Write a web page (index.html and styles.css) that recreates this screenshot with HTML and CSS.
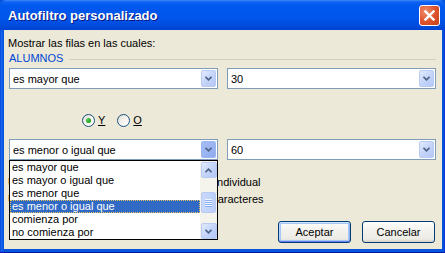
FILE: index.html
```html
<!DOCTYPE html>
<html lang="es">
<head>
    <meta charset="UTF-8">
    <title>Autofiltro personalizado</title>
    <link rel="stylesheet" href="styles.css">
</head>
<body>

<div class="window">
    <div class="titlebar">
        <span class="title">Autofiltro personalizado</span>
        <button class="close" title="Cerrar">
            <svg width="11" height="11" viewBox="0 0 11 11"><path d="M1.5 1.5 L9.5 9.5 M9.5 1.5 L1.5 9.5" stroke="#fff" stroke-width="2.4" stroke-linecap="square"/></svg>
        </button>
    </div>

    <div class="frame">
        <div class="client">
            <p class="intro">Mostrar las filas en las cuales:</p>

            <div class="group">
                <span class="group-label">ALUMNOS</span>
                <span class="group-line"></span>
            </div>

            <div class="row">
                <div class="combo">
                    <span class="combo-text">es mayor que</span>
                    <span class="drop-btn"><svg width="7" height="5" viewBox="0 0 7 5"><path d="M0.5 0.8 L3.5 3.8 L6.5 0.8" fill="none" stroke="#4D6185" stroke-width="1.6"/></svg></span>
                </div>
                <div class="combo">
                    <span class="combo-text">30</span>
                    <span class="drop-btn"><svg width="7" height="5" viewBox="0 0 7 5"><path d="M0.5 0.8 L3.5 3.8 L6.5 0.8" fill="none" stroke="#4D6185" stroke-width="1.6"/></svg></span>
                </div>
            </div>

            <div class="radios">
                <label class="radio"><span class="radio-dot checked"></span><u>Y</u></label>
                <label class="radio"><span class="radio-dot"></span><u>O</u></label>
            </div>

            <div class="row second">
                <div class="combo">
                    <span class="combo-text">es menor o igual que</span>
                    <span class="drop-btn pressed"><svg width="7" height="5" viewBox="0 0 7 5"><path d="M0.5 0.8 L3.5 3.8 L6.5 0.8" fill="none" stroke="#4D6185" stroke-width="1.6"/></svg></span>
                </div>
                <div class="combo">
                    <span class="combo-text">60</span>
                    <span class="drop-btn"><svg width="7" height="5" viewBox="0 0 7 5"><path d="M0.5 0.8 L3.5 3.8 L6.5 0.8" fill="none" stroke="#4D6185" stroke-width="1.6"/></svg></span>
                </div>
            </div>

            <p class="hint first">Use ? para representar cualquier carácter individual</p>
            <p class="hint">Use * para representar cualquier serie de caracteres</p>

            <div class="buttons">
                <button class="btn default">Aceptar</button>
                <button class="btn">Cancelar</button>
            </div>

            <!-- open list of the second combo -->
            <div class="dropdown">
                <ul class="options">
                    <li>es mayor que</li>
                    <li>es mayor o igual que</li>
                    <li>es menor que</li>
                    <li class="selected">es menor o igual que</li>
                    <li>comienza por</li>
                    <li>no comienza por</li>
                </ul>
                <div class="scrollbar">
                    <span class="sb-btn"><svg width="7" height="5" viewBox="0 0 7 5"><path d="M0.5 4.2 L3.5 1.2 L6.5 4.2" fill="none" stroke="#4D6185" stroke-width="1.6"/></svg></span>
                    <span class="sb-thumb"><i></i><i></i><i></i><i></i></span>
                    <span class="sb-btn"><svg width="7" height="5" viewBox="0 0 7 5"><path d="M0.5 0.8 L3.5 3.8 L6.5 0.8" fill="none" stroke="#4D6185" stroke-width="1.6"/></svg></span>
                </div>
            </div>
        </div>
    </div>
</div>

</body>
</html>
```

FILE: styles.css
```css
body {
    margin: 0;
    padding: 0;
    font-family: "Liberation Sans", Arial, sans-serif;
    font-size: 11px;
    color: #000;
    background-color: #ECE9D8;
}

p {
    margin: 0;
}

.window {
    width: 445px;
    height: 253px;
    display: flex;
    flex-direction: column;
    background-color: #0855DD;
    overflow: hidden;
}

.titlebar {
    height: 30px;
    flex: none;
    display: flex;
    align-items: center;
    justify-content: space-between;
    padding: 0 5px 0 8px;
    box-sizing: border-box;
    background: linear-gradient(#3C8CF8 0, #0D62F2 2px, #0058EE 6px, #0055EA 18px, #004BDD 26px, #0042CF 30px);
    border-radius: 6px 6px 0 0;
}

.title {
    color: #fff;
    font-weight: bold;
    font-size: 13px;
    text-shadow: 1px 1px #0A1883;
    margin-top: 1px;
}

.close {
    width: 21px;
    height: 21px;
    padding: 0;
    border: 1px solid #fff;
    border-radius: 3px;
    background: radial-gradient(circle at 30% 30%, #EE8E6E 0, #E0552E 50%, #C7401A 100%);
    display: flex;
    align-items: center;
    justify-content: center;
    margin-top: 1px;
}

.frame {
    flex: 1;
    padding: 0 3px 4px 4px;
    background: linear-gradient(90deg, #0831D9 0, #166AEE 1px, #0855DD 3px, #0855DD calc(100% - 2px), #0831D9 100%);
    display: flex;
    box-shadow: inset 0 -1px #0019A8;
}

.client {
    flex: 1;
    position: relative;
    background-color: #ECE9D8;
    padding: 0 6px 0 5px;
    display: flex;
    flex-direction: column;
}

.intro {
    margin: 7px 0 0 -1px;
    line-height: 13px;
}

.group {
    display: flex;
    align-items: center;
    margin-top: 2px;
    height: 13px;
}

.group-label {
    color: #0046D5;
    line-height: 13px;
}

.group-line {
    flex: 1;
    height: 1px;
    background-color: #D0D0BF;
    margin: 1px 0 0 6px;
}

.row {
    display: flex;
    gap: 9px;
    margin-top: 3px;
}

.row.second {
    margin-top: 12px;
}

.combo {
    width: 209px;
    height: 21px;
    box-sizing: border-box;
    border: 1px solid #7F9DB9;
    background-color: #fff;
    display: flex;
    align-items: center;
}

.combo-text {
    flex: 1;
    padding-left: 3px;
    white-space: nowrap;
}

.drop-btn, .sb-btn {
    width: 15px;
    height: 17px;
    margin-right: 1px;
    box-sizing: border-box;
    border: 1px solid #B9CBF3;
    border-radius: 2px;
    background: linear-gradient(135deg, #E3EBFD 0, #C5D5FA 50%, #B3C6F5 100%);
    display: flex;
    align-items: center;
    justify-content: center;
}

.drop-btn.pressed {
    background: linear-gradient(135deg, #A6BDF4 0, #8FACF0 100%);
    border-color: #9DB6EE;
}

.radios {
    display: flex;
    gap: 12px;
    margin-top: 25px;
    padding-left: 73px;
    height: 13px;
}

.radio {
    display: flex;
    align-items: center;
    gap: 3px;
    line-height: 13px;
}

.radio-dot {
    width: 13px;
    height: 13px;
    box-sizing: border-box;
    border: 1px solid #1C5180;
    border-radius: 50%;
    background: linear-gradient(135deg, #DCDBD5 0, #F4F3EE 50%, #FFFFFF 100%);
    display: flex;
    align-items: center;
    justify-content: center;
}

.radio-dot.checked::after {
    content: "";
    width: 5px;
    height: 5px;
    border-radius: 50%;
    background: radial-gradient(circle at 35% 35%, #5BD05B 0, #21A121 60%, #1A8A1A 100%);
}

.hint {
    margin: 4px 0 0 -1px;
    line-height: 13px;
}

.hint.first {
    margin-top: 16px;
}

.buttons {
    display: flex;
    justify-content: flex-end;
    gap: 11px;
    margin: 15px 1px 0 0;
}

.btn {
    width: 73px;
    height: 22px;
    padding: 0;
    font-family: inherit;
    font-size: 11px;
    color: #000;
    border: 1px solid #003C74;
    border-radius: 3px;
    background: linear-gradient(#FFFFFF 0, #F3F2EE 40%, #ECEBE6 85%, #D6D0C5 100%);
}

.btn.default {
    box-shadow: inset 0 1px #CEE7FF, inset 0 -1px #6982EE, inset 1px 0 #B8D5FA, inset -1px 0 #8FB0EE, inset 0 0 0 2px #A8C6F6;
}

.dropdown {
    position: absolute;
    left: 5px;
    top: 130px;
    width: 209px;
    height: 80px;
    box-sizing: border-box;
    border: 1px solid #000;
    background-color: #fff;
    display: flex;
}

.options {
    list-style: none;
    margin: 0;
    padding: 0;
    flex: 1;
}

.options li {
    height: 13px;
    line-height: 13px;
    padding-left: 2px;
    white-space: nowrap;
}

.options li.selected {
    background-color: #316AC5;
    color: #fff;
    outline: 1px dotted #E8C45A;
    outline-offset: -1px;
}

.scrollbar {
    width: 17px;
    background-color: #F5F4EC;
    display: flex;
    flex-direction: column;
    align-items: center;
    padding-top: 1px;
    box-sizing: border-box;
}

.sb-btn {
    width: 16px;
    height: 16px;
    margin: 0;
}

.sb-thumb {
    width: 15px;
    height: 21px;
    margin: 14px 0 10px;
    box-sizing: border-box;
    border: 1px solid #B9CBF3;
    border-radius: 2px;
    background: linear-gradient(90deg, #C9D8FC 0, #BBCFF9 100%);
    display: flex;
    flex-direction: column;
    align-items: center;
    justify-content: center;
    gap: 1px;
}

.sb-thumb i {
    width: 7px;
    height: 1px;
    background-color: #EEF4FE;
    box-shadow: 0 1px #8CB0F8;
}
```
